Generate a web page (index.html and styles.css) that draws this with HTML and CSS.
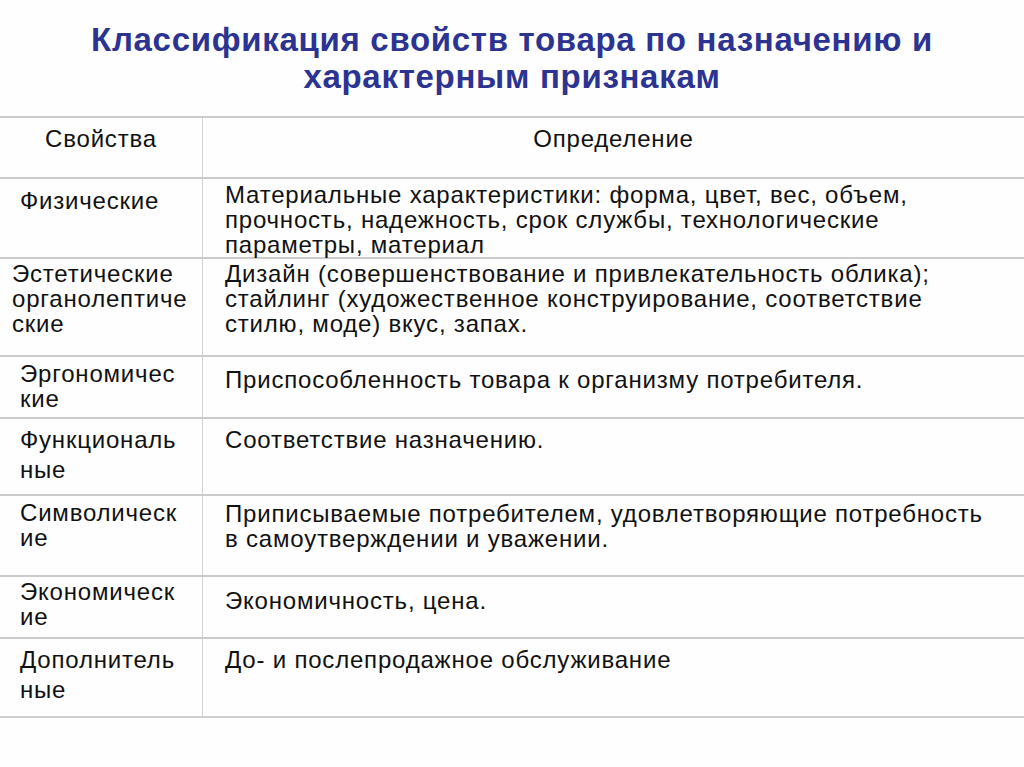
FILE: index.html
```html
<!DOCTYPE html>
<html lang="ru">
<head>
<meta charset="utf-8">
<title>Классификация свойств товара</title>
<link rel="stylesheet" href="styles.css">
</head>
<body>
<div class="slide">
  <header class="title-block">
    <h1 class="title">Классификация свойств товара по назначению и<br>характерным признакам</h1>
  </header>
  <div class="table">
    <div class="row row-head">
      <div class="cell cell-left center pt8">Свойства</div>
      <div class="cell cell-right center pt8">Определение</div>
    </div>
    <div class="row row-1">
      <div class="cell cell-left pt9">Физические</div>
      <div class="cell cell-right pt3">Материальные характеристики: форма, цвет, вес, объем,<br>прочность, надежность, срок службы, технологические<br>параметры, материал</div>
    </div>
    <div class="row row-2">
      <div class="cell cell-left indent-sm pt2">Эстетические<br>органолептиче<br>ские</div>
      <div class="cell cell-right pt2">Дизайн (совершенствование и привлекательность облика);<br>стайлинг (художественное конструирование, соответствие<br>стилю, моде) вкус, запах.</div>
    </div>
    <div class="row row-3">
      <div class="cell cell-left pt4">Эргономичес<br>кие</div>
      <div class="cell cell-right pt10">Приспособленность товара к организму потребителя.</div>
    </div>
    <div class="row row-4">
      <div class="cell cell-left loose pt6">Функциональ<br>ные</div>
      <div class="cell cell-right pt8">Соответствие назначению.</div>
    </div>
    <div class="row row-5">
      <div class="cell cell-left pt4">Символическ<br>ие</div>
      <div class="cell cell-right pt5">Приписываемые потребителем, удовлетворяющие потребность<br>в самоутверждении и уважении.</div>
    </div>
    <div class="row row-6">
      <div class="cell cell-left pt2">Экономическ<br>ие</div>
      <div class="cell cell-right pt11">Экономичность, цена.</div>
    </div>
    <div class="row row-7 row-last">
      <div class="cell cell-left loose pt6">Дополнитель<br>ные</div>
      <div class="cell cell-right pt8">До- и послепродажное обслуживание</div>
    </div>
  </div>
</div>
</body>
</html>
```
FILE: styles.css
```css
* { box-sizing: border-box; }
html, body {
  margin: 0;
  padding: 0;
  background: #ffffff;
}
body {
  font-family: "Liberation Sans", Arial, sans-serif;
  color: #111111;
}
.slide {
  width: 1024px;
  height: 767px;
  overflow: hidden;
  background: #fefefe;
}
.title-block {
  height: 116px;
  display: flex;
  align-items: center;
  justify-content: center;
}
.title {
  margin: 0;
  font-size: 33px;
  line-height: 37px;
  letter-spacing: 0.7px;
  font-weight: bold;
  color: #2c3391;
  text-align: center;
}
.table {
  border-bottom: 2px solid #cfcfcf;
}
.row {
  display: grid;
  grid-template-columns: 203px 1fr;
  border-top: 2px solid #cbcbcb;
}
.row-head { height: 61px; }
.row-1 { height: 80px; }
.row-2 { height: 98px; }
.row-3 { height: 62px; }
.row-4 { height: 77px; }
.row-5 { height: 81px; }
.row-6 { height: 62px; }
.row-7 { height: 79px; }
.cell {
  font-size: 24px;
  line-height: 25px;
  letter-spacing: 0.8px;
  white-space: nowrap;
}
.cell-left {
  border-right: 1px solid #d2d2d2;
  padding-left: 20px;
}
.cell-right {
  padding-left: 22px;
}
.center {
  text-align: center;
  padding-left: 0;
}
.indent-sm { padding-left: 12px; }
.loose { line-height: 30px; }
.pt2 { padding-top: 2px; }
.pt3 { padding-top: 3px; }
.pt4 { padding-top: 4px; }
.pt5 { padding-top: 5px; }
.pt6 { padding-top: 6px; }
.pt8 { padding-top: 8px; }
.pt9 { padding-top: 9px; }
.pt10 { padding-top: 10px; }
.pt11 { padding-top: 11px; }
```
